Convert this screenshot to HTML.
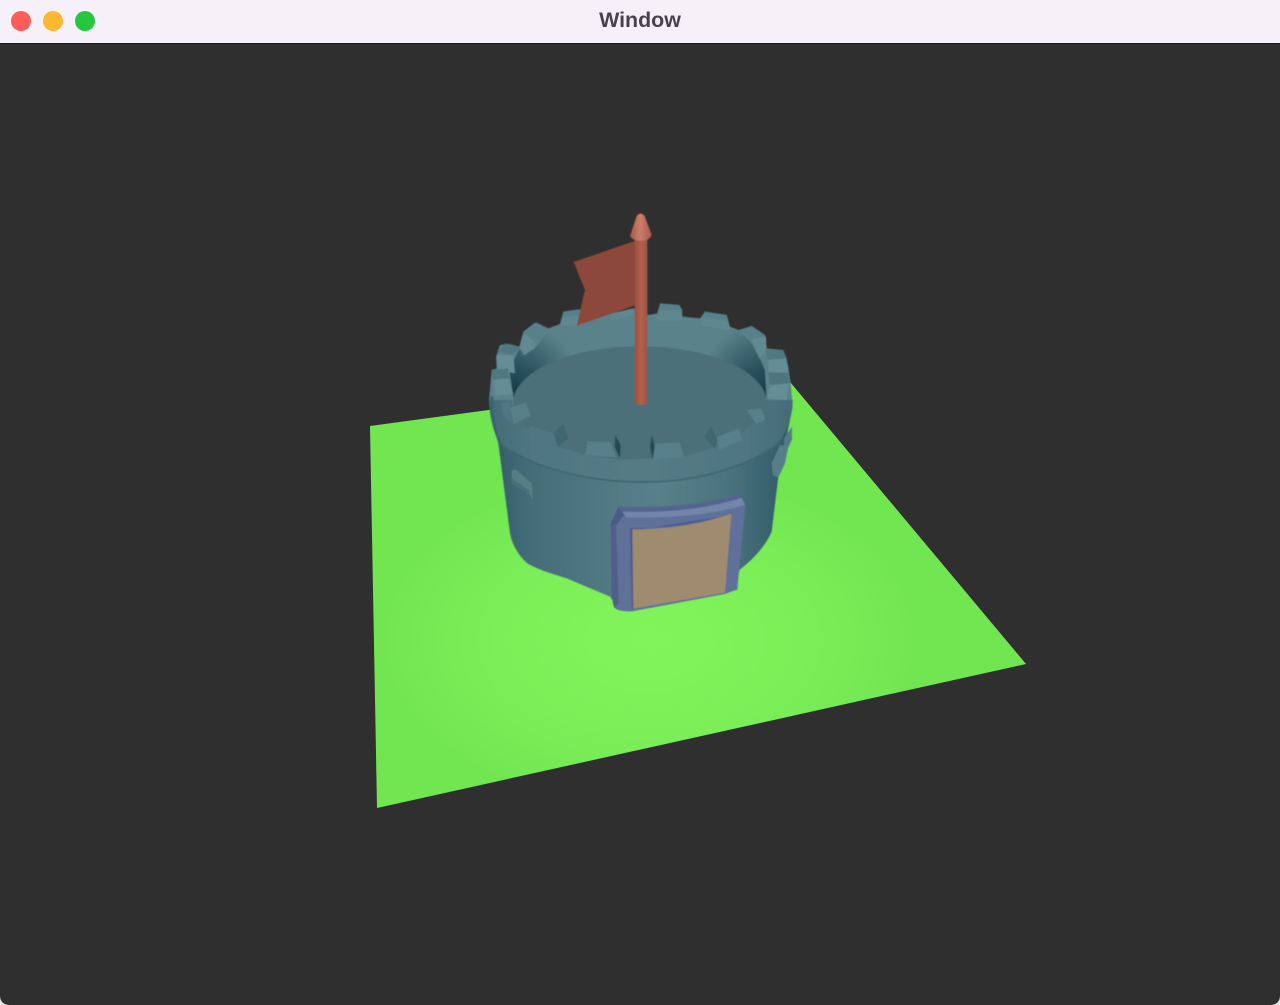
<!DOCTYPE html>
<html><head><meta charset="utf-8"><style>
html,body{margin:0;padding:0;width:1280px;height:1005px;overflow:hidden;background:#2f2f2f}
#bar{position:absolute;left:0;top:0;width:1280px;height:43px;background:#f6f1f8;border-bottom:1px solid #1c1c1c;box-sizing:content-box}
#t{position:absolute;left:0;width:1280px;top:8px;text-align:center;font:bold 21.4px/25px "Liberation Sans",sans-serif;color:#48434e}
.d{position:absolute;top:11px;width:20px;height:20px;border-radius:50%}
svg{position:absolute;left:0;top:0}
</style></head><body>
<svg width="1280" height="1005" viewBox="0 0 1280 1005">
<defs>
<radialGradient id="gr" gradientUnits="userSpaceOnUse" cx="0" cy="0" r="1" gradientTransform="translate(650,640) scale(270,170)">
<stop offset="0" stop-color="#82f45b"/><stop offset=".55" stop-color="#7cef58"/><stop offset="1" stop-color="#72e651"/></radialGradient>
<linearGradient id="wall" gradientUnits="userSpaceOnUse" x1="85" x2="950" y1="0" y2="0">
<stop offset="0" stop-color="#365f6b"/><stop offset=".1" stop-color="#436c77"/><stop offset=".3" stop-color="#4e7680"/><stop offset=".55" stop-color="#58808a"/><stop offset=".8" stop-color="#4a737d"/><stop offset=".94" stop-color="#38626e"/><stop offset="1" stop-color="#335c68"/></linearGradient>
<radialGradient id="dl" gradientUnits="userSpaceOnUse" cx="125" cy="570" r="210">
<stop offset="0" stop-color="#163d4a" stop-opacity="1"/><stop offset=".35" stop-color="#1d4451" stop-opacity=".8"/><stop offset="1" stop-color="#1d4451" stop-opacity="0"/></radialGradient>
<radialGradient id="dr" gradientUnits="userSpaceOnUse" cx="895" cy="570" r="210">
<stop offset="0" stop-color="#163d4a" stop-opacity="1"/><stop offset=".35" stop-color="#1d4451" stop-opacity=".8"/><stop offset="1" stop-color="#1d4451" stop-opacity="0"/></radialGradient>
<linearGradient id="rim" gradientUnits="userSpaceOnUse" x1="50" x2="970" y1="0" y2="0">
<stop offset="0" stop-color="#436b76"/><stop offset=".15" stop-color="#4f7681"/><stop offset=".5" stop-color="#557c86"/><stop offset=".85" stop-color="#4f7681"/><stop offset="1" stop-color="#436b76"/></linearGradient>
<linearGradient id="pole" gradientUnits="userSpaceOnUse" x1="494" x2="532" y1="0" y2="0">
<stop offset="0" stop-color="#96503f"/><stop offset=".5" stop-color="#b3604e"/><stop offset="1" stop-color="#9d5342"/></linearGradient>
<linearGradient id="tip" gradientUnits="userSpaceOnUse" x1="482" x2="545" y1="0" y2="0">
<stop offset="0" stop-color="#a85b4a"/><stop offset=".45" stop-color="#cc7e6a"/><stop offset="1" stop-color="#a85b4a"/></linearGradient>
<filter id="s"><feGaussianBlur stdDeviation=".5"/></filter>
</defs>
<polygon points="370,426 600,395 780,370 1026,664 377,808" fill="url(#gr)"/>
<g filter="url(#s)">
<!-- body, zoom2 coordinates -->
<g transform="translate(470,400) scale(.33333)">
<path d="M60,40 L85,130 L120,400 C128,440 150,470 172,490 C210,512 260,525 290,535 L420,590 L440,620 L800,570 L808,510 C860,470 890,430 905,395 L925,230 L960,60 Z" fill="url(#wall)"/>
<path d="M125,212 L137,208 L186,250 L188,300 L178,283 L125,250 Z" fill="#567e87"/>
<path d="M125,235 L178,272 L178,283 L125,250 Z" fill="#47707b"/>
<path d="M905,190 L930,135 L955,140 L945,190 L925,232 L908,226 Z" fill="#547e88"/>
<path d="M942,115 L966,80 L966,118 L955,142 L942,135 Z" fill="#527c86"/>
</g>
<!-- back rim, zoom1 coordinates -->
<g transform="translate(470,200) scale(.33333)">
<path d="M57,600 L65,510 L80,505 L78,470 L90,435 L118,432 L148,440 L160,395 L195,368 L235,385 L270,372 L280,335 L325,328 L425,340 L490,325 L535,345 L562,340 L570,310 L628,315 L638,350 L690,355 L705,335 L770,345 L780,380 L805,390 L845,378 L885,405 L890,445 L940,450 L955,500 L962,550 L968,620 L960,660 L65,660 Z" fill="#5a828b"/>
<path d="M130,590 L118,510 L148,445 L165,465 L198,440 L238,388 L272,378 L560,365 L640,355 L690,360 L780,385 L805,392 L842,425 L872,480 L885,510 L890,600 Z" fill="url(#dl)"/>
<path d="M130,590 L118,510 L148,445 L165,465 L198,440 L238,388 L272,378 L560,365 L640,355 L690,360 L780,385 L805,392 L842,425 L872,480 L885,510 L890,600 Z" fill="url(#dr)"/>
<!-- left merlons -->
<path d="M160,400 L200,368 L235,385 L195,425 Z" fill="#56808a"/>
<path d="M160,400 L195,425 L195,445 L160,465 L150,440 Z" fill="#628a92"/>
<path d="M85,455 L105,430 L148,440 L130,465 Z" fill="#507883"/>
<path d="M80,465 L130,465 L135,520 L85,510 Z" fill="#658d95"/>
<path d="M65,510 L115,505 L115,535 L70,540 Z" fill="#507883"/>
<path d="M70,540 L115,535 L130,582 L75,588 Z" fill="#658d95"/>
<!-- right merlons -->
<path d="M810,390 L845,378 L885,405 L845,420 Z" fill="#56808a"/>
<path d="M845,418 L888,410 L890,450 L868,475 Z" fill="#628a92"/>
<path d="M885,450 L940,450 L950,475 L895,480 Z" fill="#507883"/>
<path d="M895,480 L950,475 L955,520 L895,515 Z" fill="#658d95"/>
<path d="M895,518 L955,518 L958,552 L900,556 Z" fill="#4f7680"/>
<path d="M900,556 L956,550 L950,602 L890,595 Z" fill="#658d95"/>
<!-- back merlons -->
<g fill="#56808a">
<path d="M280,335 L325,328 L335,345 L278,352 Z"/>
<path d="M570,310 L628,315 L638,332 L565,332 Z"/>
<path d="M705,335 L770,345 L775,362 L695,352 Z"/>
</g>
<g fill="#5f8790">
<path d="M278,352 L335,345 L340,375 L270,378 Z"/>
<path d="M428,340 L488,325 L495,345 L420,362 Z"/>
<path d="M565,332 L636,332 L638,362 L560,362 Z"/>
<path d="M695,352 L775,362 L780,390 L690,376 Z"/>
</g>
<!-- floor -->
<ellipse cx="510" cy="610" rx="381" ry="171" fill="#4c6f79"/>
</g>
<!-- front rim, zoom2 coordinates -->
<g transform="translate(470,400) scale(.33333)">
<path d="M57,0 C58,50 70,90 85,125 C180,205 360,248 530,246 C700,245 850,190 925,130 C950,95 968,50 968,0 L890,0 C880,50 830,95 745,140 L640,170 L450,180 L345,165 L262,140 C190,110 130,70 125,0 Z" fill="url(#rim)"/>
<path d="M85,125 C180,205 360,248 530,246 C700,245 850,190 925,130" fill="none" stroke="#3f6873" stroke-width="6"/>
<path d="M60,-10 C60,40 70,90 85,125 L95,130 C75,90 68,40 70,-10 Z" fill="#3a6470"/>
<!-- front merlons -->
<g fill="#507682">
<path d="M92,10 L120,0 L125,70 L100,50 Z"/>
<path d="M180,78 L250,100 L262,140 L170,100 Z"/>
<path d="M805,85 L820,90 L745,150 L742,120 Z"/>
</g>
<g fill="#58808a">
<path d="M122,22 L168,8 L182,48 L130,72 Z"/>
<path d="M352,124 L422,126 L440,172 L345,165 Z"/>
<path d="M556,131 L630,128 L642,170 L550,178 Z"/>
<path d="M740,112 L805,85 L816,118 L746,150 Z"/>
<path d="M830,30 L875,25 L885,60 L860,72 Z"/>
</g>
<g fill="#3f6772">
<path d="M252,98 L280,72 L294,115 L263,140 Z"/>
<path d="M702,112 L722,80 L742,118 L735,146 Z"/>
</g>
<g fill="#234a58">
<path d="M436,105 L452,135 L450,176 L434,140 Z"/>
<path d="M546,105 L554,140 L547,178 L540,140 Z"/>
</g>
<!-- door -->
<path d="M420,375 L445,320 C600,325 720,310 810,280 L826,315 L805,530 L802,568 L765,582 L485,634 C460,634 442,632 432,622 L425,590 Z" fill="#5f7199"/>
<path d="M420,375 L445,320 L462,345 L440,375 L422,380 Z" fill="#4b5c84"/>
<path d="M445,320 C600,325 720,310 810,280 L815,292 C720,325 600,338 455,335 Z" fill="#53658f"/>
<path d="M458,335 C600,340 720,325 815,294 L825,315 C720,345 600,355 470,352 Z" fill="#7286ab"/>
<path d="M422,380 L438,378 L446,610 L432,622 L425,590 Z" fill="#505f88"/>
<path d="M480,384 C600,385 700,370 786,337 L783,345 L488,392 L492,626 L486,628 Z" fill="#4a5b88"/>
<path d="M487,388 C600,388 700,372 784,340 L765,578 L490,626 Z" fill="#9f8b6e"/>
</g>
<!-- flag & pole, zoom1 coordinates -->
<g transform="translate(470,200) scale(.33333)">
<path d="M311,186 L497,122 L505,315 L490,318 L320,378 L345,270 Z" fill="#8c4a3b"/>
<path d="M494,120 L532,120 L532,605 C532,618 494,618 494,605 Z" fill="url(#pole)"/>
<path d="M500,48 Q512,34 524,48 L545,105 Q540,118 525,122 L500,122 Q486,118 480,108 Z" fill="url(#tip)"/>
</g>
</g>
<!-- window corners -->
<path d="M0,995 Q0,1005 10,1005 L0,1005 Z" fill="#e8e8e8"/>
<path d="M1280,995 Q1280,1005 1270,1005 L1280,1005 Z" fill="#e8e8e8"/>
</svg>
<div id="bar"><div id="t">Window</div>
<div class="d" style="left:11px;background:#fd5d58;"></div>
<div class="d" style="left:43px;background:#fcb82e;"></div>
<div class="d" style="left:75px;background:#26c73f;"></div>
</div>
</body></html>
